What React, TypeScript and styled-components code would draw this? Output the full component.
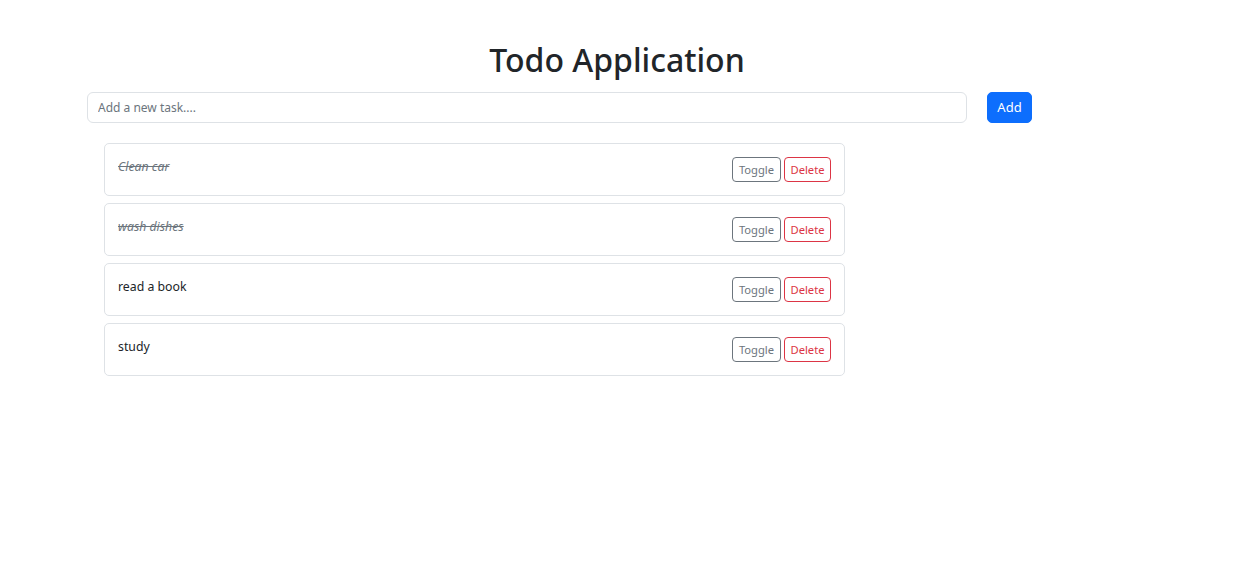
import React, { useState } from "react";
import styled, { createGlobalStyle } from "styled-components";

const Global = createGlobalStyle`
  html, body { margin: 0; padding: 0; background: #fff; }
  body {
    font-family: "Noto Sans", "Open Sans", "Liberation Sans", sans-serif;
    color: #212529;
    -webkit-font-smoothing: antialiased;
  }
  * { box-sizing: border-box; }
`;

const Page = styled.div`
  display: flex;
  flex-direction: column;
  padding: 41px 0 0 87px;
  width: 1234px;
`;

const Title = styled.h1`
  margin: 0 0 12.6px -87px;
  width: 1234px;
  text-align: center;
  font-size: 32px;
  font-weight: 500;
  line-height: 1.2;
  color: #212529;
`;

const Form = styled.form`
  display: flex;
  align-items: center;
  gap: 20px;
  width: 945px;
`;

const Input = styled.input`
  flex: 1;
  height: 31px;
  padding: 4px 10px;
  font-family: inherit;
  font-size: 12px;
  color: #212529;
  border: 1px solid #dee2e6;
  border-radius: 6px;
  outline: none;
  &::placeholder { color: #6c757d; }
`;

const AddButton = styled.button`
  height: 31px;
  width: 45px;
  padding: 0;
  font-family: inherit;
  font-size: 13px;
  color: #fff;
  background: #0d6efd;
  border: 1px solid #0d6efd;
  border-radius: 5px;
`;

const List = styled.ul`
  list-style: none;
  margin: 20px 0 0 17px;
  padding: 0;
  width: 741px;
  display: flex;
  flex-direction: column;
  gap: 7px;
`;

const Item = styled.li`
  display: flex;
  justify-content: space-between;
  align-items: flex-start;
  height: 53px;
  padding: 13px;
  border: 1px solid #dee2e6;
  border-radius: 5px;
`;

const Text = styled.span<{ $done: boolean }>`
  font-size: 12.3px;
  line-height: 19px;
  color: ${(p) => (p.$done ? "#6c757d" : "#212529")};
  font-style: ${(p) => (p.$done ? "italic" : "normal")};
  text-decoration: ${(p) => (p.$done ? "line-through" : "none")};
`;

const Actions = styled.div`
  display: flex;
  gap: 3px;
`;

const SmallButton = styled.button<{ $variant: "secondary" | "danger" }>`
  height: 25px;
  min-width: ${(p) => (p.$variant === "danger" ? "47px" : "49px")};
  padding: 0 5.5px;
  font-family: inherit;
  font-size: 11.2px;
  background: #fff;
  color: ${(p) => (p.$variant === "danger" ? "#dc3545" : "#6c757d")};
  border: 1px solid ${(p) => (p.$variant === "danger" ? "#dc3545" : "#6c757d")};
  border-radius: 4px;
`;

const initial = [
  { text: "Clean car", done: true },
  { text: "wash dishes", done: true },
  { text: "read a book", done: false },
  { text: "study", done: false },
];

export default function App() {
  const [todos] = useState(initial);
  return (
    <>
      <Global />
      <Page>
        <Title>Todo Application</Title>
        <Form onSubmit={(e) => e.preventDefault()}>
          <Input placeholder="Add a new task...." />
          <AddButton type="submit">Add</AddButton>
        </Form>
        <List>
          {todos.map((t) => (
            <Item key={t.text}>
              <Text $done={t.done}>{t.text}</Text>
              <Actions>
                <SmallButton $variant="secondary">Toggle</SmallButton>
                <SmallButton $variant="danger">Delete</SmallButton>
              </Actions>
            </Item>
          ))}
        </List>
      </Page>
    </>
  );
}
